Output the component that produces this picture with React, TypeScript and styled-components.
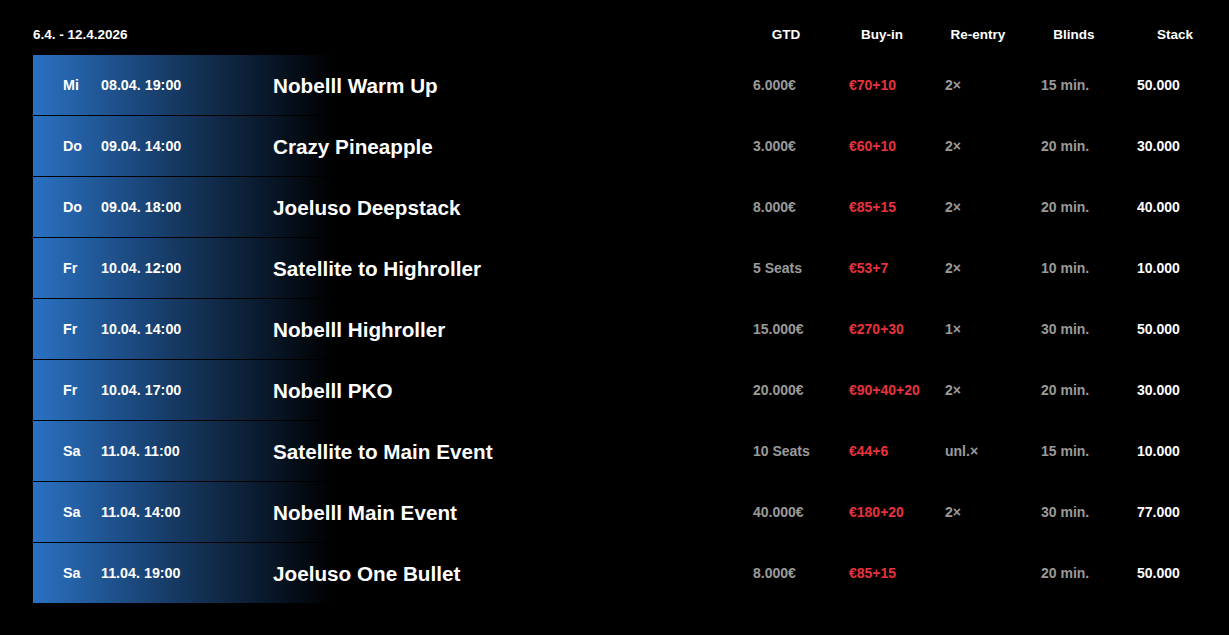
import React from "react";
import styled, { createGlobalStyle } from "styled-components";

const Global = createGlobalStyle`
  html, body { margin: 0; padding: 0; background: #000; }
  body { font-family: "Liberation Sans", Arial, sans-serif; -webkit-font-smoothing: antialiased; }
`;

const COLS = "30px 38px 172px 465px 96px 96px 96px 96px 106px";

const Page = styled.div`
  width: 1229px;
  height: 635px;
  background: #000;
  padding: 23px 0 0 33px;
  box-sizing: border-box;
`;

const HeaderRow = styled.div`
  display: grid;
  grid-template-columns: ${COLS};
  height: 22px;
  align-items: center;
  margin-bottom: 10px;
  color: #fff;
  font-weight: 700;
  font-size: 13.5px;
`;

const Range = styled.div`
  grid-column: 1 / 5;
  font-size: 13.5px;
`;

const HeadCell = styled.div`
  text-align: center;
`;

const List = styled.div`
  display: flex;
  flex-direction: column;
  gap: 1px;
`;

const Row = styled.div`
  display: grid;
  grid-template-columns: ${COLS};
  height: 60px;
  align-items: center;
  background: linear-gradient(90deg, #2a71c3 0px, #163a64 140px, #000 300px);
`;

const Day = styled.div`
  grid-column: 2;
  color: #fff;
  font-weight: 700;
  font-size: 14.3px;
`;

const DateCell = styled.div`
  color: #fff;
  font-weight: 700;
  font-size: 14.3px;
`;

const Title = styled.div`
  color: #fff;
  font-weight: 700;
  font-size: 20.7px;
  padding-top: 1px;
`;

const Value = styled.div<{ $tone: "gray" | "red" | "white" }>`
  padding-left: 15px;
  padding-bottom: 1px;
  font-weight: 700;
  font-size: 14px;
  color: ${(p) => (p.$tone === "red" ? "#e8323d" : p.$tone === "white" ? "#fff" : "#9a9a9a")};
`;

type Ev = {
  day: string;
  date: string;
  title: string;
  gtd: string;
  buyin: string;
  re: string;
  blinds: string;
  stack: string;
};

const events: Ev[] = [
  { day: "Mi", date: "08.04. 19:00", title: "Nobelll Warm Up", gtd: "6.000€", buyin: "€70+10", re: "2×", blinds: "15 min.", stack: "50.000" },
  { day: "Do", date: "09.04. 14:00", title: "Crazy Pineapple", gtd: "3.000€", buyin: "€60+10", re: "2×", blinds: "20 min.", stack: "30.000" },
  { day: "Do", date: "09.04. 18:00", title: "Joeluso Deepstack", gtd: "8.000€", buyin: "€85+15", re: "2×", blinds: "20 min.", stack: "40.000" },
  { day: "Fr", date: "10.04. 12:00", title: "Satellite to Highroller", gtd: "5 Seats", buyin: "€53+7", re: "2×", blinds: "10 min.", stack: "10.000" },
  { day: "Fr", date: "10.04. 14:00", title: "Nobelll Highroller", gtd: "15.000€", buyin: "€270+30", re: "1×", blinds: "30 min.", stack: "50.000" },
  { day: "Fr", date: "10.04. 17:00", title: "Nobelll PKO", gtd: "20.000€", buyin: "€90+40+20", re: "2×", blinds: "20 min.", stack: "30.000" },
  { day: "Sa", date: "11.04. 11:00", title: "Satellite to Main Event", gtd: "10 Seats", buyin: "€44+6", re: "unl.×", blinds: "15 min.", stack: "10.000" },
  { day: "Sa", date: "11.04. 14:00", title: "Nobelll Main Event", gtd: "40.000€", buyin: "€180+20", re: "2×", blinds: "30 min.", stack: "77.000" },
  { day: "Sa", date: "11.04. 19:00", title: "Joeluso One Bullet", gtd: "8.000€", buyin: "€85+15", re: "", blinds: "20 min.", stack: "50.000" },
];

export default function App() {
  return (
    <>
      <Global />
      <Page>
        <HeaderRow>
          <Range>6.4. - 12.4.2026</Range>
          <HeadCell>GTD</HeadCell>
          <HeadCell>Buy-in</HeadCell>
          <HeadCell>Re-entry</HeadCell>
          <HeadCell>Blinds</HeadCell>
          <HeadCell>Stack</HeadCell>
        </HeaderRow>
        <List>
          {events.map((e, i) => (
            <Row key={i}>
              <Day>{e.day}</Day>
              <DateCell>{e.date}</DateCell>
              <Title>{e.title}</Title>
              <Value $tone="gray">{e.gtd}</Value>
              <Value $tone="red">{e.buyin}</Value>
              <Value $tone="gray">{e.re}</Value>
              <Value $tone="gray">{e.blinds}</Value>
              <Value $tone="white">{e.stack}</Value>
            </Row>
          ))}
        </List>
      </Page>
    </>
  );
}
